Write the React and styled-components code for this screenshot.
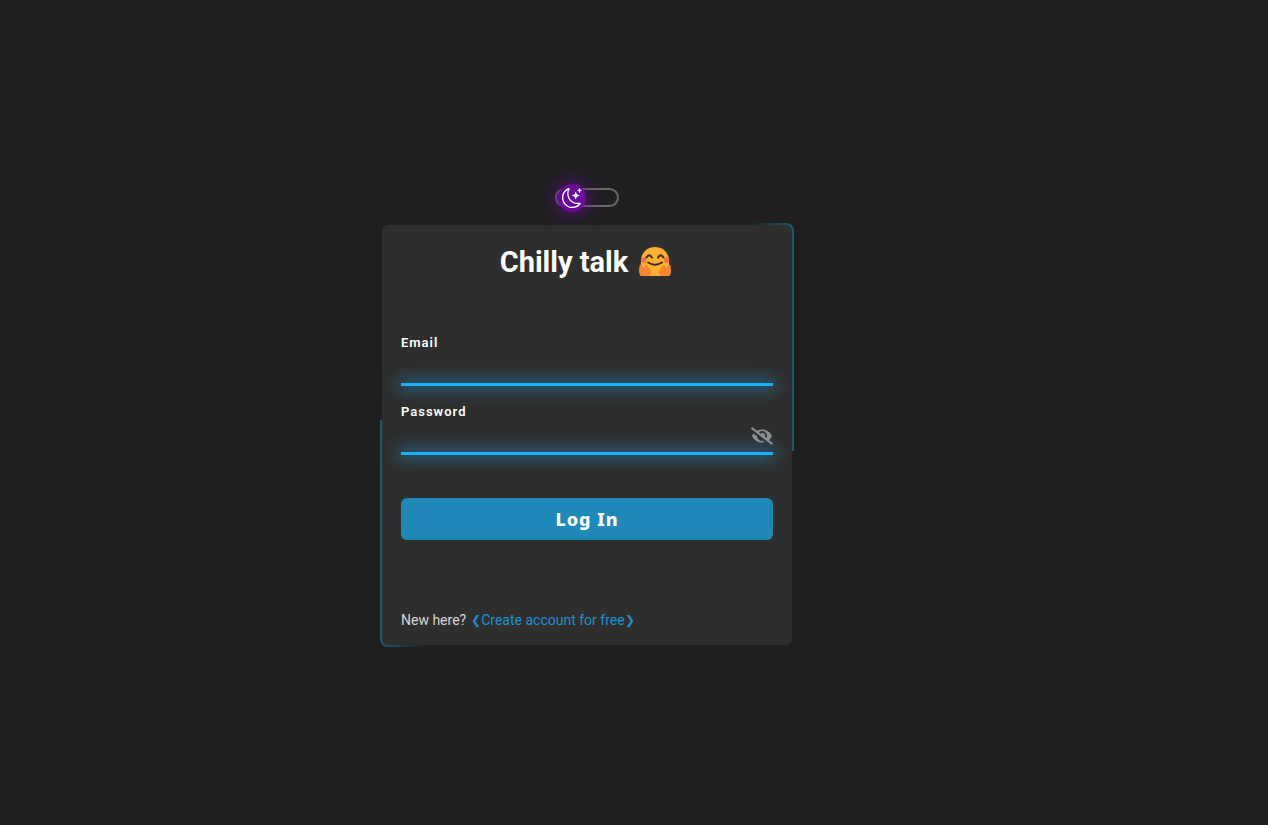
import React, { useState } from "react";
import styled, { createGlobalStyle } from "styled-components";
import { BsMoonStars } from "react-icons/bs";
import { FaEyeSlash } from "react-icons/fa";

const GlobalStyle = createGlobalStyle`
  *, *::before, *::after { box-sizing: border-box; }
  body {
    margin: 0;
    background: #1f1f1f;
    color: #fff;
    font-family: Roboto, "Liberation Sans", sans-serif;
  }
`;

const Page = styled.main`
  min-height: 100vh;
  display: flex;
  flex-direction: column;
  align-items: center;
  justify-content: center;
  gap: 16px;
  padding: 10px 94px 0 0;
`;

const ThemeSwitch = styled.button`
  display: flex;
  align-items: center;
  width: 64px;
  height: 19px;
  padding: 0 1px;
  border: 2px solid #686868;
  border-radius: 10px;
  background: transparent;
  cursor: pointer;
`;

const Knob = styled.span`
  flex: none;
  display: flex;
  align-items: center;
  justify-content: center;
  width: 28px;
  height: 28px;
  border-radius: 50%;
  background: #6a0a98;
  box-shadow: 0 0 20px #6a0a98;
  color: #fff;
`;

const Glow = styled.div`
  width: 414px;
  max-width: 100%;
  padding: 2px;
  border-radius: 8px;
  background:
    linear-gradient(to right, transparent, #1c5a76) top right / 44px 228px no-repeat,
    linear-gradient(to left, transparent, #1c5a76) bottom left / 48px 227px no-repeat;
`;

const Card = styled.form`
  display: flex;
  flex-direction: column;
  min-height: 420px;
  padding: 20px 19px 15px;
  border-radius: 6px;
  background: #2e2e2e;
`;

const Title = styled.h1`
  display: flex;
  align-items: center;
  justify-content: center;
  gap: 10px;
  margin: 0 0 56px;
  font-size: 29px;
  line-height: 34px;
  font-weight: 700;
`;

const Field = styled.div`
  display: flex;
  flex-direction: column;
  margin-bottom: 18px;
`;

const Label = styled.label`
  font-size: 13px;
  line-height: 16px;
  font-weight: 600;
  letter-spacing: 1px;
  color: #fff;
`;

const FieldBox = styled.div`
  display: flex;
  align-items: center;
  position: relative;
  height: 35px;
  padding-bottom: 3px;

  &::after {
    content: "";
    position: absolute;
    left: 0;
    right: 0;
    bottom: 0;
    height: 3px;
    background: #1cb0f9;
    box-shadow: 0 0 16px 2px #1cb0f9aa;
  }
`;

const Input = styled.input`
  flex: 1;
  min-width: 0;
  height: 28px;
  padding: 0;
  border: 0;
  outline: 0;
  background: transparent;
  color: #fff;
  font: 400 16px Roboto, sans-serif;
`;

const EyeButton = styled.button`
  display: flex;
  padding: 0;
  border: 0;
  background: transparent;
  color: #8f8f8f;
  cursor: pointer;
`;

const Submit = styled.button`
  height: 42px;
  margin-top: 25px;
  border: 0;
  border-radius: 6px;
  background: #1e88b8;
  color: #fff;
  font: 800 18px "Noto Sans", sans-serif;
  letter-spacing: 1px;
  cursor: pointer;
`;

const Footer = styled.p`
  display: flex;
  align-items: center;
  gap: 5px;
  margin: auto 0 0;
  font-size: 14px;
  line-height: 20px;
  color: #d8d8d8;
`;

const SignUp = styled.a`
  display: flex;
  align-items: center;
  color: #1f94d0;
  text-decoration: none;
`;

const Angle = styled.span`
  font-size: 12px;
`;

function HugFace() {
  return (
    <svg width="36" height="34" viewBox="0 0 36 34" aria-label="Hugging face" role="img">
      <path d="M17 2C8.500 2 3.500 8 3 15L2.500 31h29L31 15C30.500 8 25.500 2 17 2z" fill="#ffb02e" />
      <circle cx="5.500" cy="15" r="2.700" fill="#ff6d3d" />
      <circle cx="28.500" cy="15" r="2.700" fill="#ff6d3d" />
      <path
        d="M1.500 21q0-2 2-1l3 3 1-3q2-1 2 2 4 2 3.500 6-.5 2-2.500 3H3.500Q1 30 1 26zM32.500 21q0-2-2-1l-3 3-1-3q-2-1-2 2-4 2-3.500 6 .5 2 2.500 3h7Q33 30 33 26z"
        fill="#ff822d"
      />
      <path
        d="M8.500 12.500q2.700-4.500 5.500 0M20 12.500q2.700-4.500 5.500 0M10 17.500q7 4.500 14 0"
        fill="none"
        stroke="#402a32"
        strokeWidth="2"
        strokeLinecap="round"
      />
    </svg>
  );
}

export default function App() {
  const [visible, setVisible] = useState(false);
  return (
    <Page>
      <GlobalStyle />
      <ThemeSwitch type="button" aria-label="Toggle theme">
        <Knob><BsMoonStars size={20} /></Knob>
      </ThemeSwitch>
      <Glow>
        <Card>
          <Title>Chilly talk <HugFace /></Title>
          <Field>
            <Label htmlFor="email">Email</Label>
            <FieldBox><Input id="email" type="email" /></FieldBox>
          </Field>
          <Field>
            <Label htmlFor="password">Password</Label>
            <FieldBox>
              <Input id="password" type={visible ? "text" : "password"} />
              <EyeButton type="button" aria-label="Show password" onClick={() => setVisible(!visible)}>
                <FaEyeSlash size={22} />
              </EyeButton>
            </FieldBox>
          </Field>
          <Submit type="submit">Log In</Submit>
          <Footer>
            New here?
            <SignUp href="#signup"><Angle>❮</Angle>Create account for free<Angle>❯</Angle></SignUp>
          </Footer>
        </Card>
      </Glow>
    </Page>
  );
}
